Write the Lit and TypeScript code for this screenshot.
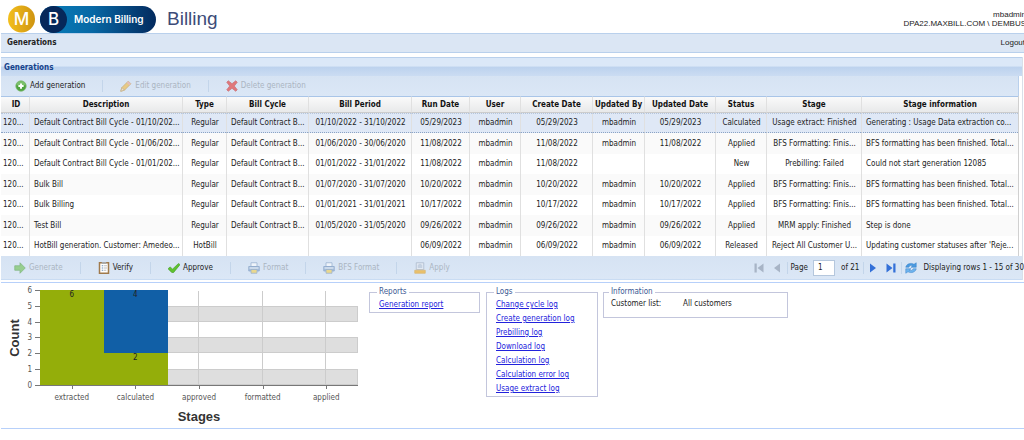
import { LitElement, html, svg, css } from "lit";
import { customElement, state } from "lit/decorators.js";

type Row = string[];

const COLUMNS: { title: string; width?: number; left?: boolean }[] = [
  { title: "ID", width: 28, left: true },
  { title: "Description", width: 153, left: true },
  { title: "Type", width: 44 },
  { title: "Bill Cycle", width: 82, left: true },
  { title: "Bill Period", width: 103 },
  { title: "Run Date", width: 58 },
  { title: "User", width: 51 },
  { title: "Create Date", width: 72 },
  { title: "Updated By", width: 52 },
  { title: "Updated Date", width: 71 },
  { title: "Status", width: 51 },
  { title: "Stage", width: 95 },
  { title: "Stage information", left: true },
];

const ID = "120...";
const CONTRACT = "Default Contract Bill Cycle";
const CYCLE = "Default Contract B...";
const FORMATTED = "BFS formatting has been finished. Total...";

const ROWS: Row[] = [
  [ID, CONTRACT + " - 01/10/202...", "Regular", CYCLE, "01/10/2022 - 31/10/2022", "05/29/2023", "mbadmin", "05/29/2023", "mbadmin", "05/29/2023", "Calculated", "Usage extract: Finished", "Generating : Usage Data extraction co..."],
  [ID, CONTRACT + " - 01/06/202...", "Regular", CYCLE, "01/06/2020 - 30/06/2020", "11/08/2022", "mbadmin", "11/08/2022", "mbadmin", "11/08/2022", "Applied", "BFS Formatting: Finis...", FORMATTED],
  [ID, CONTRACT + " - 01/01/202...", "Regular", CYCLE, "01/01/2022 - 31/01/2022", "11/08/2022", "mbadmin", "11/08/2022", "", "", "New", "Prebilling: Failed", "Could not start generation 12085"],
  [ID, "Bulk Bill", "Regular", CYCLE, "01/07/2020 - 31/07/2020", "10/20/2022", "mbadmin", "10/20/2022", "mbadmin", "10/20/2022", "Applied", "BFS Formatting: Finis...", FORMATTED],
  [ID, "Bulk Billing", "Regular", CYCLE, "01/01/2021 - 31/01/2021", "10/17/2022", "mbadmin", "10/17/2022", "mbadmin", "10/17/2022", "Applied", "BFS Formatting: Finis...", FORMATTED],
  [ID, "Test Bill", "Regular", CYCLE, "01/05/2020 - 31/05/2020", "09/26/2022", "mbadmin", "09/26/2022", "mbadmin", "09/26/2022", "Applied", "MRM apply: Finished", "Step is done"],
  [ID, "HotBill generation. Customer: Amedeo...", "HotBill", "", "", "06/09/2022", "mbadmin", "06/09/2022", "mbadmin", "06/09/2022", "Released", "Reject All Customer U...", "Updating customer statuses after 'Reje..."],
];

const LOGS = ["Change cycle log", "Create generation log", "Prebilling log", "Download log", "Calculation log", "Calculation error log", "Usage extract log"];

const ICONS: Record<string, unknown> = {
  add: svg`<circle cx="8" cy="8" r="7" fill="#4fa33f" stroke="#86bd7c"/><path d="M2 7a6 5.500 0 0 1 12 0z" fill="#8fcd7f" opacity=".7"/><path d="M8 4.500v7M4.500 8h7" stroke="#fff" stroke-width="2.600"/>`,
  edit: svg`<path d="M1 15l1.500-5L11 1.500l3.500 3.500L6 13.500z" fill="#f3b93c" stroke="#b98a34"/><path d="M11 1.500l3.500 3.500-2 2L9 3.500z" fill="#e7a39a"/><path d="M1 15l1.500-5L6 13.500z" fill="#f0dcb8" stroke="#b99044"/>`,
  remove: svg`<path d="M1 3l2-2 5 4L13 1l2 2-4 5 4 5-2 2-5-4-5 4-2-2 4-5z" fill="#e6302c" stroke="#c02b2b"/>`,
  generate: svg`<path d="M1 5h7V1l7 7-7 7v-4H1z" fill="#6cbf4c" stroke="#4a9a38"/>`,
  verify: svg`<path d="M2 1h12v14H2z" fill="#fff" stroke="#a07a4c" stroke-width="2"/><path d="M5 5h2M5 8h2M5 11h2" stroke="#6d90bb" stroke-width="1.500"/><path d="M8 5h4M8 8h4M8 11h3" stroke="#aaa"/><path d="M5 0h6v2.500H5z" fill="#a9a9a9"/>`,
  approve: svg`<path d="M0 9l3-2.500 3 3L14 2l2 1.500L7.500 14H5z" fill="#5fc22f" stroke="#3f9a22" stroke-width=".8"/>`,
  printer: svg`<path d="M4 1h8v5H4z" fill="#fff" stroke="#6f8fb8"/><path d="M1 6h14v6H1z" fill="#86a6cf" stroke="#5b7fae"/><path d="M2 7h12v2H2z" fill="#d8e2ee"/><path d="M4 10h8v5H4z" fill="#f4cf4b" stroke="#6f8fb8"/>`,
  apply: svg`<path d="M3 1h10v9H3z" fill="#e9edf3" stroke="#8e9bb0"/><path d="M5 4l3-2 3 2v4H5z" fill="#b8c4d6"/><path d="M1 11h14v4H1z" fill="#f5a80f" stroke="#d79a22"/>`,
  first: svg`<path d="M2 2h3v12H2zM14 2v12L6 8z" fill="#8895a8"/>`,
  prev: svg`<path d="M12 2v12L4 8z" fill="#8895a8"/>`,
  next: svg`<path d="M4 2v12l8-6z" fill="#3370d8"/>`,
  last: svg`<path d="M2 2v12l8-6zM11 2h3v12h-3z" fill="#3370d8"/>`,
  refresh: svg`<path d="M1 7a7 6 0 0 1 11-4l3-2v6H8l2.500-2A4 4 0 0 0 5 7z" fill="#4a9ae0" stroke="#2d78c4" stroke-width=".6"/><path d="M15 9a7 6 0 0 1-11 4l-3 2V9h7l-2.500 2A4 4 0 0 0 11 9z" fill="#6db4ee" stroke="#2d78c4" stroke-width=".6"/>`,
};

const icon = (name: string) => html`<svg class="icon" viewBox="0 0 16 16" aria-hidden="true">${ICONS[name]}</svg>`;

@customElement("stage-chart")
export class StageChart extends LitElement {
  static styles = css`
    :host { display: block; width: 366px; flex: none; }
    .chart { display: block; width: 100%; font-family: "DejaVu Sans Condensed", "Noto Sans", sans-serif; font-size: 8px; }
    .tick { fill: #555; }
    .value { fill: #222; }
    .title { fill: #333; font-family: "Liberation Sans", sans-serif; font-size: 13px; font-weight: 700; }
    .band { fill: #dedede; stroke: #ccc; }
    .grid { stroke: #ccc; }
    .axis { stroke: #777; }
    .green { fill: #94ae0a; }
    .blue { fill: #115fa6; }
  `;

  private stages = ["extracted", "calculated", "approved", "formatted", "applied"];
  private bars = [
    { stage: 0, from: 0, to: 6, color: "green" },
    { stage: 1, from: 0, to: 2, color: "green" },
    { stage: 1, from: 2, to: 6, color: "blue" },
  ];

  render() {
    const x = (i: number) => 39 + i * 63.6;
    const y = (v: number) => Math.round(101.5 - v * 15.75);
    return html`<svg class="chart" viewBox="0 0 366 145" role="img" aria-label="Count by stages">
      ${[0, 2, 4].map((v) => svg`<rect class="band" x="39.5" y=${y(v + 1) + 0.5} width="317" height=${y(v) - y(v + 1) - 1}></rect>`)}
      ${this.stages.map((_, i) => svg`<line class="grid" x1=${Math.round(x(i + 0.5)) - 0.5} x2=${Math.round(x(i + 0.5)) - 0.5} y1="8" y2="102"></line>`)}
      ${this.bars.map((b) => svg`<rect class=${b.color} x=${Math.round(x(b.stage))} y=${y(b.to)} width="64" height=${y(b.from) - y(b.to)}></rect>
        <text class="value" text-anchor="middle" x=${x(b.stage + 0.5)} y=${y(b.to) + 7}>${b.to - b.from}</text>`)}
      <path class="axis" fill="none" d="M39 102.500H357"></path>
      ${this.stages.map((s, i) => svg`<line class="axis" x1=${Math.round(x(i + 0.5)) + 0.5} x2=${Math.round(x(i + 0.5)) + 0.5} y1="102" y2="106"></line>
        <text class="tick" text-anchor="middle" x=${x(i + 0.5)} y="117">${s}</text>`)}
      ${[0, 1, 2, 3, 4, 5, 6].map((v) => svg`<line class="axis" x1="34" x2="39" y1=${y(v) + 0.5} y2=${y(v) + 0.5}></line>
        <text class="tick" text-anchor="end" x="31" y=${y(v) + 3}>${v}</text>`)}
      <text class="title" text-anchor="middle" x="198" y="138">Stages</text>
      <text class="title" text-anchor="middle" transform="rotate(-90 18 55)" x="18" y="55">Count</text>
    </svg>`;
  }
}

@customElement("app-root")
export class AppRoot extends LitElement {
  @state() private selected = 0;

  static styles = css`
    :host { display: block; overflow: hidden; background: #fff; color: #222; font-family: "DejaVu Sans Condensed", "Noto Sans", sans-serif; font-size: 8px; line-height: 12px; }
    * { box-sizing: border-box; }
    button, input { font: inherit; color: inherit; }
    .icon { width: 12px; height: 12px; flex: none; }

    .top { display: flex; align-items: center; height: 33px; padding: 4px 0 0 8px; }
    .logo { display: block; width: 148px; height: 28px; }
    .mark { font: 500 17px Inter, sans-serif; fill: #fff; }
    .brand { font: 600 10px Inter, sans-serif; fill: #fff; }
    .product { margin: 0 0 0 11px; font: 400 19px/24px "Liberation Sans", sans-serif; color: #3d4b78; }
    .user { margin: 0 -2px 0 auto; font: 8px/9px "Liberation Sans", sans-serif; text-align: right; white-space: nowrap; }

    .crumbs { display: flex; align-items: center; justify-content: space-between; height: 20px; margin-left: 1px; padding-left: 6px; background: #dbe6f4; border: solid #b9d0ec; border-width: 1px 0; }
    .crumb { margin: 0; font-size: 8px; font-weight: 700; }
    .logout { margin-right: -1px; font-family: "Liberation Sans", sans-serif; color: #222; text-decoration: none; }

    .panel { margin: 4px 1px 0; border-right: 1px solid #d9dfe8; }
    .panel-title { margin: 0; height: 19px; padding-left: 3px; font-size: 8px; line-height: 20px; color: #15428b; border-top: 1px solid #b9d0ec; background: linear-gradient(#dbe8f8 0 45%, #bcd2ee 50%, #cbdcf2); }
    .bar { display: flex; align-items: center; background: linear-gradient(#d6e3f3, #dbe7f6); }
    .tools { height: 20px; margin-right: 3px; padding-left: 14px; border-right: 1px solid #b9d0ec; }
    .actions { height: 24px; padding-left: 13px; border-bottom: 1px solid #c9dcf3; }
    .tool { display: flex; align-items: center; gap: 3px; padding: 0; border: 0; background: none; white-space: nowrap; }
    .tool:disabled { color: #8d969f; opacity: 0.6; }
    .sep { width: 1px; height: 12px; margin: 0 17px; background: #c3d5ea; flex: none; }

    .grid { width: calc(100% - 3px); table-layout: fixed; border-collapse: separate; border-spacing: 0; border-right: 1px solid #d0d0d0; }
    .grid th, .grid td { padding: 0 1px 0 2px; overflow: hidden; text-overflow: ellipsis; white-space: nowrap; text-align: center; border-left: 1px solid #e0e0e0; }
    .grid th { height: 17px; padding: 0; color: #111; background: linear-gradient(#fafafa, #e8e9ea); border-bottom: 1px solid #ccc; border-top: 1px solid #a9c5e8; }
    .grid td { height: 20px; }
    .grid tr:nth-child(even) td { height: 21px; background: #fafafa; }
    .grid tr.selected td { background: #dfe8f6; border-bottom: 1px dotted #8ba3c4; border-top: 1px dotted #b5c5dc; }
    .grid td.left { text-align: left; padding-left: 4px; }
    .grid th:first-child, .grid td:first-child { border-left: 0; padding-left: 2px; }

    .pager { display: flex; align-items: center; gap: 6px; margin: 0 -2px 0 auto; white-space: nowrap; }
    .page { width: 22px; height: 16px; padding: 0 4px; border: 1px solid #b5c7dd; background: #fff; }
    .page-label { display: flex; align-items: center; gap: 5px; }
    .pager .sep { margin: 0 -3px 0 -2px; }

    .details { display: flex; align-items: flex-start; margin: 2px 0 0 1px; height: 147px; border: solid #b7d0fa; border-width: 1px 0; }
    .group { min-width: 0; margin: 4px 0 0; padding: 1px 9px 0; border: 1px solid #c3c6dc; }
    .reports { width: 111px; margin-left: 2px; }
    .logs { width: 112px; margin-left: 6px; }
    .info { width: 185px; margin-left: 5px; padding: 0 7px 6px; }
    .legend { padding: 0 2px; margin-left: -2px; line-height: 10px; color: #3b5a94; }
    .links { margin: 0; padding: 0; list-style: none; line-height: 14px; }
    .link { color: #2222dc; }
    .facts { display: grid; grid-template-columns: 72px 1fr; margin: 0; line-height: 14px; }
    .fact { margin: 0; }
  `;

  private tool(iconName: string, label: string, disabled = false) {
    return html`<button class="tool" ?disabled=${disabled}>${icon(iconName)}${label}</button>`;
  }

  render() {
    const sep = html`<span class="sep"></span>`;
    return html`
      <header class="top">
        <svg class="logo" viewBox="0 0 148 28" role="img" aria-label="Modern Billing">
          <defs>
            <linearGradient id="gold" x1="0" y1="0" x2="1" y2="0"><stop offset="0" stop-color="#f3bf1d"></stop><stop offset="1" stop-color="#cf9410"></stop></linearGradient>
            <linearGradient id="sea" x1="0" y1="0" x2="1" y2="0"><stop offset="0.150" stop-color="#0878b4"></stop><stop offset="0.450" stop-color="#0768a5"></stop><stop offset="1" stop-color="#032a5e"></stop></linearGradient>
          </defs>
          <circle cx="13.500" cy="14" r="13.500" fill="url(#gold)"></circle>
          <rect x="32" y="1" width="116" height="27" rx="13.500" fill="url(#sea)"></rect>
          <circle cx="45.500" cy="14.500" r="13.500" fill="#06285a"></circle>
          <text class="mark" x="13.500" y="20" text-anchor="middle">M</text>
          <text class="mark" x="45.500" y="20" text-anchor="middle">B</text>
          <text class="brand" x="66" y="18">Modern Billing</text>
        </svg>
        <h1 class="product">Billing</h1>
        <div class="user">mbadmin<br />DPA22.MAXBILL.COM \\ DEMBUS</div>
      </header>

      <nav class="crumbs">
        <h2 class="crumb">Generations</h2>
        <a class="logout" href="#logout">Logout</a>
      </nav>

      <section class="panel">
        <h3 class="panel-title">Generations</h3>
        <div class="bar tools">
          ${this.tool("add", "Add generation")}${sep}${this.tool("edit", "Edit generation", true)}${sep}${this.tool("remove", "Delete generation", true)}
        </div>
        <table class="grid">
          <colgroup>${COLUMNS.map((c) => html`<col width=${c.width ?? "auto"} />`)}</colgroup>
          <thead><tr>${COLUMNS.map((c) => html`<th scope="col">${c.title}</th>`)}</tr></thead>
          <tbody>
            ${ROWS.map((r, i) => html`<tr class=${i === this.selected ? "selected" : ""} @click=${() => (this.selected = i)}>
              ${r.map((t, c) => html`<td class=${COLUMNS[c].left ? "left" : ""}>${t}</td>`)}
            </tr>`)}
          </tbody>
        </table>
        <div class="bar actions">
          ${this.tool("generate", "Generate", true)}${sep}${this.tool("verify", "Verify")}${sep}${this.tool("approve", "Approve")}${sep}${this.tool("printer", "Format", true)}${sep}${this.tool("printer", "BFS Format", true)}${sep}${this.tool("apply", "Apply", true)}
          <div class="pager">
            <button class="tool" disabled aria-label="First page">${icon("first")}</button>
            <button class="tool" disabled aria-label="Previous page">${icon("prev")}</button>
            ${sep}
            <label class="page-label">Page <input class="page" type="text" .value=${"1"} /></label>
            <span>of 21</span>
            ${sep}
            <button class="tool" aria-label="Next page">${icon("next")}</button>
            <button class="tool" aria-label="Last page">${icon("last")}</button>
            ${sep}
            <button class="tool" aria-label="Refresh">${icon("refresh")}</button>
            <span>Displaying rows 1 - 15 of 30</span>
          </div>
        </div>
      </section>

      <section class="details">
        <stage-chart></stage-chart>
        <fieldset class="group reports">
          <legend class="legend">Reports</legend>
          <ul class="links"><li><a class="link" href="#report">Generation report</a></li></ul>
        </fieldset>
        <fieldset class="group logs">
          <legend class="legend">Logs</legend>
          <ul class="links">${LOGS.map((l) => html`<li><a class="link" href="#log">${l}</a></li>`)}</ul>
        </fieldset>
        <fieldset class="group info">
          <legend class="legend">Information</legend>
          <dl class="facts"><dt class="fact">Customer list:</dt><dd class="fact">All customers</dd></dl>
        </fieldset>
      </section>
    `;
  }
}
